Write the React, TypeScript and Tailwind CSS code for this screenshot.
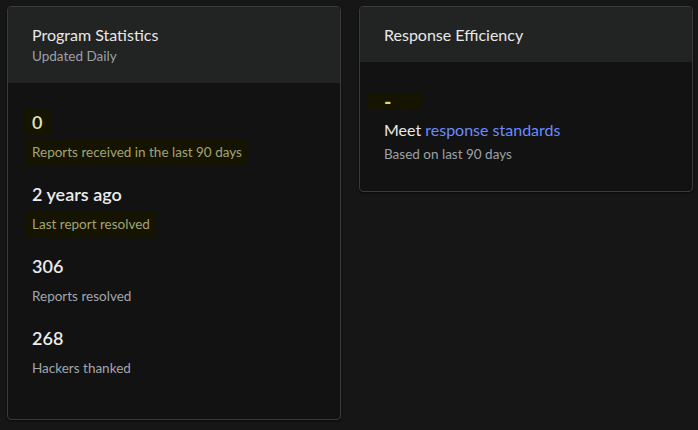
import React from "react";

type Stat = {
  value: string;
  label: string;
  marked?: "both" | "label";
};

const stats: Stat[] = [
  { value: "0", label: "Reports received in the last 90 days", marked: "both" },
  { value: "2 years ago", label: "Last report resolved", marked: "label" },
  { value: "306", label: "Reports resolved" },
  { value: "268", label: "Hackers thanked" },
];

function Card({
  title,
  subtitle,
  children,
}: {
  title: string;
  subtitle?: string;
  children: React.ReactNode;
}) {
  return (
    <div className="rounded-[4px] border border-[#3a3b3c] bg-[#121212] overflow-hidden shadow-[0_1px_2px_rgba(0,0,0,0.6)]">
      <div className={`bg-[#222323] px-6 pt-[17px] ${subtitle ? "pb-[17px]" : "pb-[16px]"}`}>
        <h2 className="text-[16px] leading-[22px] text-[#e8e8e8]">{title}</h2>
        {subtitle && <p className="text-[13.5px] leading-[20px] text-[#9ca1a8]">{subtitle}</p>}
      </div>
      {children}
    </div>
  );
}

function StatBlock({ stat }: { stat: Stat }) {
  const valueMarked = stat.marked === "both";
  const labelMarked = !!stat.marked;
  return (
    <div className="flex flex-col items-start gap-[4px]">
      <div
        className={`text-[18px] leading-[26px] font-semibold ${
          valueMarked ? "-ml-[9px] px-[9px] bg-[#141400] text-[#e4e6b4]" : "text-[#ececec]"
        }`}
      >
        {stat.value}
      </div>
      <div
        className={`text-[13.5px] leading-[26px] ${
          labelMarked ? "-ml-[6px] px-[6px] bg-[#141400] text-[#a3a37a]" : "text-[#a2a6ad]"
        }`}
      >
        {stat.label}
      </div>
    </div>
  );
}

export default function App() {
  return (
    <div
      className="min-h-[430px] bg-[#161616] pl-[7px] pr-[5px] pt-[6px]"
      style={{ fontFamily: "Lato, 'Noto Sans', sans-serif" }}
    >
      <div className="grid grid-cols-2 gap-[18px] items-start">
        <Card title="Program Statistics" subtitle="Updated Daily">
          <div className="flex flex-col gap-4 px-6 pt-[26px] pb-[38px]">
            {stats.map((s) => (
              <StatBlock key={s.label} stat={s} />
            ))}
          </div>
        </Card>

        <Card title="Response Efficiency">
          <div className="px-6 pt-[31px] pb-[27px]">
            <div className="-ml-[16px] w-[54px] h-[17px] bg-[#141400] flex items-center pl-[16px]">
              <span className="text-[20px] leading-[17px] text-[#e6d870] font-bold">-</span>
            </div>
            <p className="mt-[9px] text-[16px] leading-[22px] text-[#e8e8e8]">
              Meet <a className="text-[#6a8bff]">response standards</a>
            </p>
            <p className="mt-[3px] text-[13.5px] leading-[20px] text-[#9ca1a8]">Based on last 90 days</p>
          </div>
        </Card>
      </div>
    </div>
  );
}
